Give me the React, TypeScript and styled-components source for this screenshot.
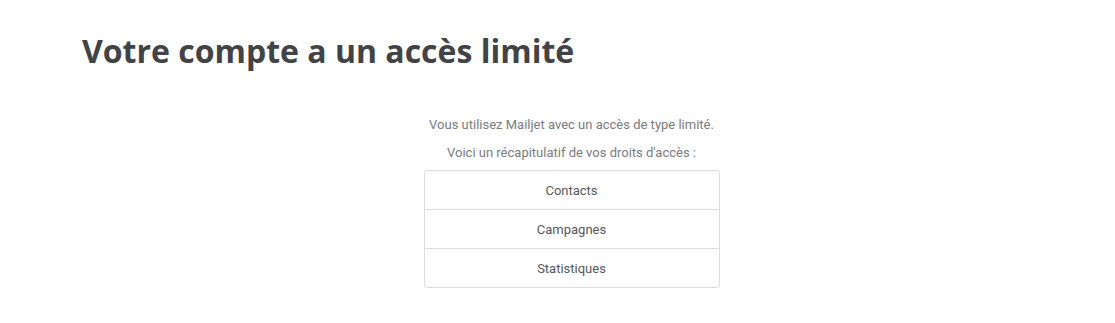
import React from "react"
import styled, { createGlobalStyle } from "styled-components"

const GlobalStyle = createGlobalStyle`
  html, body {
    margin: 0;
    padding: 0;
    background: #ffffff;
  }
  body {
    font-family: Roboto, "Liberation Sans", Arial, sans-serif;
  }
`

const Page = styled.div`
  box-sizing: border-box;
  width: 100%;
  padding: 29px 54px 0 82px;
`

const Title = styled.h1`
  margin: 0;
  font-family: "Open Sans", "Liberation Sans", sans-serif;
  font-weight: 700;
  font-size: 32px;
  line-height: 44px;
  color: #424347;
`

const Content = styled.section`
  display: flex;
  flex-direction: column;
  align-items: center;
  margin-top: 44px;
`

const Intro = styled.p`
  margin: 0 0 12px;
  font-size: 13px;
  line-height: 16px;
  color: #797b80;
  text-align: center;

  &:last-of-type {
    margin-bottom: 9px;
  }
`

const RightsList = styled.ul`
  list-style: none;
  margin: 0;
  padding: 0;
  width: 296px;
  box-sizing: border-box;
  border: 1px solid #dcdcdc;
  border-radius: 3px;
`

const RightItem = styled.li`
  height: 38px;
  display: flex;
  align-items: center;
  justify-content: center;
  font-size: 13px;
  color: #55575c;

  & + & {
    border-top: 1px solid #dcdcdc;
  }
`

const rights = ["Contacts", "Campagnes", "Statistiques"]

export default function App() {
  return (
    <>
      <GlobalStyle />
      <Page>
        <Title>Votre compte a un accès limité</Title>
        <Content>
          <Intro>Vous utilisez Mailjet avec un accès de type limité.</Intro>
          <Intro>Voici un récapitulatif de vos droits d'accès :</Intro>
          <RightsList>
            {rights.map(r => (
              <RightItem key={r}>{r}</RightItem>
            ))}
          </RightsList>
        </Content>
      </Page>
    </>
  )
}
